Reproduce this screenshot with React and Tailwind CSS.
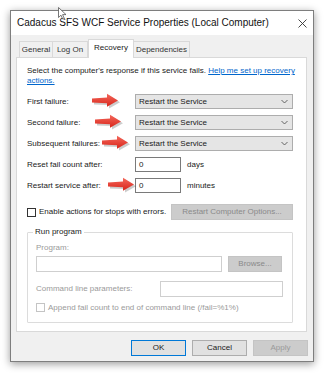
import React from 'react';

const Arrow = ({ className = '' }) => (
  <svg
    className={`absolute ${className}`}
    width="30"
    height="16"
    viewBox="0 0 30 16"
  >
    <defs>
      <linearGradient id="ar" x1="0" y1="0" x2="0" y2="1">
        <stop offset="0" stopColor="#f4685c" />
        <stop offset="1" stopColor="#d82419" />
      </linearGradient>
    </defs>
    <path d="M2 6.2 L17 5.4 L17 1.6 L28 8.2 L17 14.6 L17 11 L2 10.4 Z" fill="#000" opacity="0.2" transform="translate(1,1)" />
    <path d="M1 5.4 L16 4.6 L16 0.8 L27 7.4 L16 13.8 L16 10.2 L1 9.6 Z" fill="url(#ar)" />
  </svg>
);

const Dropdown = () => (
  <div className="flex items-center justify-between w-[158px] h-[15px] bg-[#e5e5e5] border border-[#adadad] pl-[3px] pr-[4px]">
    <span>Restart the Service</span>
    <svg width="7" height="5" viewBox="0 0 7 5">
      <path d="M0.5 1 L3.5 4 L6.5 1" fill="none" stroke="#555" strokeWidth="0.9" />
    </svg>
  </div>
);

const Input = ({ value = '', className = '' }) => (
  <div className={`h-[15px] bg-white border border-[#7a7a7a] pl-[3px] flex items-center ${className}`}>
    {value}
  </div>
);

const Row = ({ label, children, arrow }) => (
  <div className="relative flex items-center">
    <span className="w-[108px] shrink-0">{label}</span>
    {arrow}
    {children}
  </div>
);

const Checkbox = ({ disabled }) => (
  <span className={`w-[9px] h-[9px] border ${disabled ? 'border-[#c4c4c4]' : 'border-[#333]'} bg-white shrink-0`} />
);

export default function App() {
  return (
    <div className="w-[324px] h-[373px] bg-white pt-[10px] pl-[10px] overflow-hidden font-[Liberation_Sans,Arial,sans-serif] text-[8px] text-[#1a1a1a] leading-none">
      <div className="relative w-[304px] h-[352px] border border-[#7e7e7e] bg-[#f0f0f0] shadow-[0_2px_8px_rgba(0,0,0,0.4)] flex flex-col">
        {/* mouse cursor */}
        <svg className="absolute left-[47px] top-[-4px]" width="9" height="13" viewBox="0 0 9 13">
          <path d="M0.5 0.5 L0.5 10.5 L3 8.2 L4.8 12.2 L6.3 11.5 L4.6 7.6 L8 7.6 Z" fill="#fff" stroke="#555" strokeWidth="0.8" />
        </svg>

        {/* title bar */}
        <div className="h-[24px] bg-white flex items-center justify-between pl-[6px] pr-[6px] shrink-0">
          <span className="text-[10px] text-[#111]">Cadacus SFS WCF Service Properties (Local Computer)</span>
          <svg width="9" height="9" viewBox="0 0 9 9">
            <path d="M0.5 0.5 L8.5 8.5 M8.5 0.5 L0.5 8.5" stroke="#333" strokeWidth="0.9" />
          </svg>
        </div>

        {/* tabs */}
        <div className="flex items-end pl-[8px] h-[22px] shrink-0">
          <div className="h-[16px] w-[34px] border border-b-0 border-[#d9d9d9] bg-[#f0f0f0] flex items-center justify-center text-[#333]">General</div>
          <div className="h-[16px] w-[35px] border border-b-0 border-l-0 border-[#d9d9d9] bg-[#f0f0f0] flex items-center justify-center text-[#333]">Log On</div>
          <div className="relative h-[19px] w-[46px] border border-b-0 border-[#d9d9d9] bg-white flex items-center justify-center z-10 mb-[-1px] pb-[3px]">Recovery</div>
          <div className="h-[16px] w-[56px] border border-b-0 border-l-0 border-[#d9d9d9] bg-[#f0f0f0] flex items-center justify-center text-[#333]">Dependencies</div>
        </div>

        {/* panel */}
        <div className="ml-[5px] w-[291px] h-[275px] bg-white border border-[#d9d9d9] pl-[10px] pr-[13px] pt-[8px] shrink-0">
          <div className="leading-[10px]">
            <div className="whitespace-nowrap">
              Select the computer's response if this service fails.{' '}
              <span className="text-[#0066cc] underline">Help me set up recovery</span>
            </div>
            <div className="text-[#0066cc] underline">actions.</div>
          </div>

          <div className="mt-[8px] flex flex-col gap-[6px]">
            <Row label="First failure:" arrow={<Arrow className="left-[64px] top-[-1px]" />}>
              <Dropdown />
            </Row>
            <Row label="Second failure:" arrow={<Arrow className="left-[67px] top-[-1px]" />}>
              <Dropdown />
            </Row>
            <Row label="Subsequent failures:" arrow={<Arrow className="left-[74px] top-[-1px]" />}>
              <Dropdown />
            </Row>
            <Row label="Reset fail count after:">
              <Input value="0" className="w-[46px]" />
              <span className="ml-[6px]">days</span>
            </Row>
            <Row label="Restart service after:" arrow={<Arrow className="left-[80px] top-[-1px]" />}>
              <Input value="0" className="w-[46px]" />
              <span className="ml-[6px]">minutes</span>
            </Row>
          </div>

          <div className="mt-[11px] flex items-center justify-between h-[16px]">
            <div className="flex items-center gap-[3px]">
              <Checkbox />
              <span>Enable actions for stops with errors.</span>
            </div>
            <div className="w-[122px] h-[16px] bg-[#cccccc] border border-[#c4c4c4] flex items-center justify-center text-[#8a8a8a]">
              Restart Computer Options...
            </div>
          </div>

          {/* group box */}
          <div className="relative mt-[12px] h-[91px] border border-[#dcdcdc] rounded-[1px] pl-[8px] pr-[9px] pt-[9px]">
            <span className="absolute left-[5px] top-[-5px] bg-white px-[2px]">Run program</span>
            <div className="text-[#9a9a9a] mt-[2px]">Program:</div>
            <div className="mt-[4px] flex items-center gap-[6px]">
              <div className="w-[186px] h-[16px] bg-white border border-[#cfcfcf]" />
              <div className="w-[54px] h-[16px] bg-[#cccccc] border border-[#c4c4c4] flex items-center justify-center text-[#8a8a8a]">Browse...</div>
            </div>
            <div className="mt-[9px] flex items-center justify-between">
              <span className="text-[#9a9a9a]">Command line parameters:</span>
              <div className="w-[123px] h-[16px] bg-white border border-[#cfcfcf]" />
            </div>
            <div className="mt-[6px] flex items-center gap-[3px] text-[#9a9a9a]">
              <Checkbox disabled />
              <span>Append fail count to end of command line (/fail=%1%)</span>
            </div>
          </div>
        </div>

        {/* buttons */}
        <div className="mt-[8px] flex justify-end gap-[6px] pr-[5px]">
          <div className="w-[55px] h-[16px] bg-[#e1e1e1] border border-[#0078d7] flex items-center justify-center">OK</div>
          <div className="w-[55px] h-[16px] bg-[#e1e1e1] border border-[#adadad] flex items-center justify-center">Cancel</div>
          <div className="w-[55px] h-[16px] bg-[#cccccc] border border-[#c4c4c4] flex items-center justify-center text-[#9a9a9a]">Apply</div>
        </div>
      </div>
    </div>
  );
}
